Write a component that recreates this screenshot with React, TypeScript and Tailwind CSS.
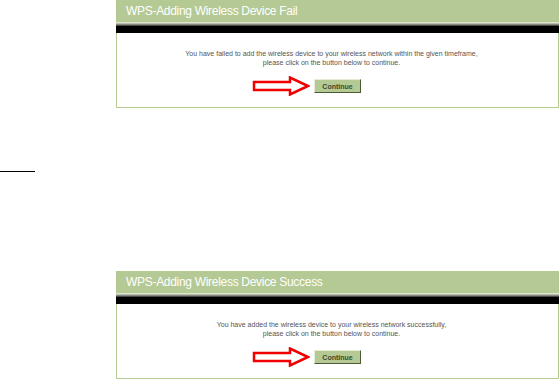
const PANELS = [
  {
    title: "WPS-Adding Wireless Device Fail",
    lines: [
      "You have failed to add the wireless device to your wireless network within the given timeframe,",
      "please click on the button below to continue.",
    ],
  },
  {
    title: "WPS-Adding Wireless Device Success",
    lines: [
      "You have added the wireless device to your wireless network successfully,",
      "please click on the button below to continue.",
    ],
  },
];

function Arrow() {
  return (
    <svg width="58" height="20" viewBox="0 0 58 20" className="block">
      <path
        d="M2 6 H38 V1.5 L56 10 L38 18.5 V14 H2 Z"
        fill="#fff"
        stroke="#f00000"
        strokeWidth="2.5"
        strokeLinejoin="miter"
      />
    </svg>
  );
}

function Panel({ title, lines }: { title: string; lines: string[] }) {
  return (
    <div className="ml-[116px] w-[443px]">
      <div className="flex h-[22px] items-center bg-[#b4c994] pl-[10px] font-['Liberation_Sans',Arial,sans-serif] text-[12px] tracking-[-0.3px] text-white">
        {title}
      </div>
      <div className="h-px bg-[#dfe6d0]" />
      <div className="h-px bg-[#b8bcae]" />
      <div className="h-px bg-[#868a7e]" />
      <div className="h-px bg-[#4a4c46]" />
      <div className="h-[7px] bg-black" />
      <div className="flex h-[75px] flex-col items-center border-x border-b border-[#b4c994] bg-white pt-[16px]">
        <div className="pr-[12px] text-center font-['Liberation_Sans',Arial,sans-serif] text-[7px] leading-[9px] text-[#555]">
          {lines.map((l) => (
            <div key={l}>{l}</div>
          ))}
        </div>
        <div className="mt-[9px] flex items-center gap-[4px] pr-[62px]">
          <Arrow />
          <button className="h-[14px] w-[47px] border border-t-[#e4ecd6] border-l-[#e4ecd6] border-b-[#4d5a38] border-r-[#4d5a38] bg-[#b4c994] font-['Liberation_Sans',Arial,sans-serif] text-[7px] font-bold leading-none text-[#3e4b2a]">
            Continue
          </button>
        </div>
      </div>
    </div>
  );
}

export default function App() {
  return (
    <div className="h-[380px] w-[560px] overflow-hidden bg-white">
      <Panel {...PANELS[0]} />
      <div className="mt-[63px] h-px w-[35px] bg-black" />
      <div className="mt-[99px]">
        <Panel {...PANELS[1]} />
      </div>
    </div>
  );
}
